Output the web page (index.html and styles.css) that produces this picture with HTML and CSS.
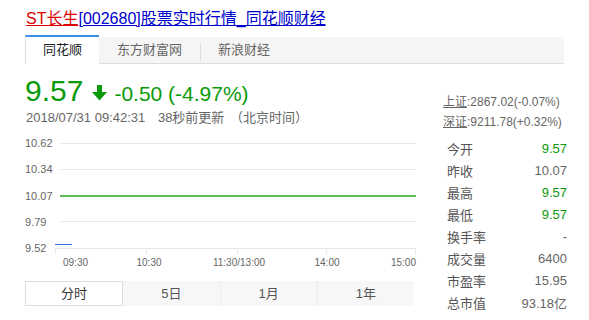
FILE: index.html
```html
<!DOCTYPE html>
<html lang="zh-CN">
<head>
    <meta charset="UTF-8">
    <title>ST长生[002680]股票实时行情_同花顺财经</title>
    <link rel="stylesheet" href="styles.css">
</head>
<body>
    <div class="page">
        <div class="title">
            <a class="title-name" href="#">ST长生</a><a class="title-rest" href="#">[002680]股票实时行情_同花顺财经</a>
        </div>

        <div class="source-tabs">
            <div class="source-tab active">同花顺</div>
            <div class="source-tab">东方财富网</div>
            <div class="source-tab sep">新浪财经</div>
        </div>

        <div class="main">
            <div class="left">
                <div class="price-row">
                    <span class="price">9.57</span>
                    <svg class="arrow" width="17" height="17" viewBox="0 0 17 17">
                        <path d="M6 1h5v7h5l-7.5 8.5L1 8h5z" fill="#0a9a0a"/>
                    </svg>
                    <span class="change">-0.50 (-4.97%)</span>
                </div>
                <div class="update-time">
                    <span>2018/07/31 09:42:31</span>
                    <span class="ago">38秒前更新</span>
                    <span class="zone">（北京时间）</span>
                </div>

                <div class="chart">
                    <div class="grid-row"><span class="axis-label">10.62</span><div class="grid-line"></div></div>
                    <div class="grid-row"><span class="axis-label">10.34</span><div class="grid-line"></div></div>
                    <div class="grid-row"><span class="axis-label">10.07</span><div class="grid-line prev-close"></div></div>
                    <div class="grid-row"><span class="axis-label">9.79</span><div class="grid-line"></div></div>
                    <div class="grid-row"><span class="axis-label">9.52</span>
                        <div class="grid-line base">
                            <span class="tick"></span>
                            <span class="tick"></span>
                            <span class="tick narrow"></span>
                            <span class="tick narrow last"></span>
                            <span class="price-line"></span>
                        </div>
                    </div>
                    <div class="time-axis">
                        <span class="time first">09:30</span>
                        <span class="time mid" style="left: 89px">10:30</span>
                        <span class="time mid" style="left: 179px">11:30/13:00</span>
                        <span class="time mid" style="left: 267px">14:00</span>
                        <span class="time end">15:00</span>
                    </div>
                </div>

                <div class="period-tabs">
                    <div class="period-tab active">分时</div>
                    <div class="period-tab">5日</div>
                    <div class="period-tab sep">1月</div>
                    <div class="period-tab sep">1年</div>
                </div>
            </div>

            <div class="right">
                <div class="index-line"><a href="#">上证</a>:2867.02(-0.07%)</div>
                <div class="index-line"><a href="#">深证</a>:9211.78(+0.32%)</div>

                <table class="quote-table">
                    <tr><td>今开</td><td class="down">9.57</td></tr>
                    <tr><td>昨收</td><td>10.07</td></tr>
                    <tr><td>最高</td><td class="down">9.57</td></tr>
                    <tr><td>最低</td><td class="down">9.57</td></tr>
                    <tr><td>换手率</td><td>-</td></tr>
                    <tr><td>成交量</td><td>6400</td></tr>
                    <tr><td>市盈率</td><td>15.95</td></tr>
                    <tr><td>总市值</td><td>93.18亿</td></tr>
                </table>
            </div>
        </div>
    </div>
</body>
</html>
```
FILE: styles.css
```css
body {
    margin: 0;
    background: #ffffff;
    font-family: "Liberation Sans", "Noto Sans CJK SC", sans-serif;
    color: #666666;
}

.page {
    width: 539px;
    padding: 9px 0 0 25px;
}

/* Title */
.title {
    font-size: 16px;
    line-height: 20px;
    margin-left: 1px;
}

.title a {
    text-decoration: underline;
}

.title-name {
    color: #dd0000;
}

.title-rest {
    color: #0000cc;
}

/* Source tabs */
.source-tabs {
    display: flex;
    margin-top: 8px;
    height: 26px;
    background: #f5f5f5;
    border-bottom: 1px solid #dddddd;
    font-size: 13px;
    line-height: 26px;
}

.source-tab {
    padding: 0 18px;
    color: #666666;
    position: relative;
}

.source-tab.sep::before {
    content: "";
    position: absolute;
    left: 0;
    top: 7px;
    height: 16px;
    border-left: 1px solid #dddddd;
}

.source-tab.active {
    background: #ffffff;
    color: #222222;
    border-top: 2px solid #3d8ee8;
    border-left: 1px solid #dddddd;
    margin-top: -2px;
    height: 27px;
    padding: 0 17px 0 17px;
}

/* Main area */
.main {
    display: flex;
    gap: 27px;
}

.left {
    width: 391px;
}

.right {
    width: 121px;
    padding-top: 28px;
}

.price-row {
    display: flex;
    align-items: baseline;
    margin-top: 9px;
    height: 36px;
    color: #0a9a0a;
}

.price {
    font-size: 30px;
    line-height: 36px;
}

.arrow {
    margin: 0 6px 0 8px;
    align-self: center;
    position: relative;
    top: 1px;
}

.change {
    font-size: 21px;
}

.update-time {
    font-size: 13px;
    line-height: 18px;
    color: #666666;
    margin-left: 1px;
}

.update-time .ago {
    margin-left: 9px;
}

.update-time .zone {
    margin-left: 2px;
}

/* Chart */
.chart {
    margin-top: 3px;
}

.grid-row {
    display: flex;
    align-items: center;
    height: 26.25px;
}

.axis-label {
    width: 35px;
    font-size: 11px;
    color: #666666;
}

.grid-line {
    flex: 1;
    height: 1px;
    background: #e8e8e8;
}

.grid-line.prev-close {
    height: 2px;
    background: #5cbf5c;
}

.grid-line.base {
    display: flex;
    height: 5px;
    margin-top: 6px;
    background: none;
    border-top: 1px solid #e8e8e8;
    position: relative;
}

.tick {
    width: 90px;
    border-left: 1px solid #e8e8e8;
}

.tick.narrow {
    width: 88px;
}

.tick.last {
    border-right: 1px solid #e8e8e8;
}

.price-line {
    position: absolute;
    left: 0;
    top: -5px;
    width: 17px;
    height: 1px;
    background: #3a74d8;
}

.time-axis {
    position: relative;
    height: 12px;
    margin: -4px 0 0 35px;
    width: 356px;
    font-size: 10px;
    line-height: 12px;
    color: #666666;
}

.time {
    position: absolute;
    top: 0;
}

.time.first {
    left: 3px;
}

.time.mid {
    transform: translateX(-50%);
}

.time.end {
    right: 0;
}

/* Period tabs */
.period-tabs {
    display: flex;
    width: 389px;
    margin-top: 12px;
    height: 25px;
    background: #f7f7f7;
    font-size: 13px;
    line-height: 25px;
    color: #555555;
}

.period-tab {
    width: 97px;
    text-align: center;
}

.period-tab.sep {
    border-left: 1px solid #ececec;
}

.period-tab.active {
    background: #ffffff;
    border: 1px solid #dddddd;
    height: 23px;
    line-height: 23px;
    color: #333333;
}

/* Right column */
.index-line {
    font-size: 12px;
    line-height: 20px;
    color: #666666;
}

.index-line a {
    color: #666666;
    text-decoration: underline;
}

.quote-table {
    margin-top: 5px;
    width: 120px;
    margin-left: 4px;
    border-collapse: collapse;
    font-size: 13px;
}

.quote-table td {
    height: 22px;
    padding: 0;
    color: #555555;
}

.quote-table td:last-child {
    text-align: right;
    color: #666666;
}

.quote-table td.down {
    color: #0a9a0a;
}
```
